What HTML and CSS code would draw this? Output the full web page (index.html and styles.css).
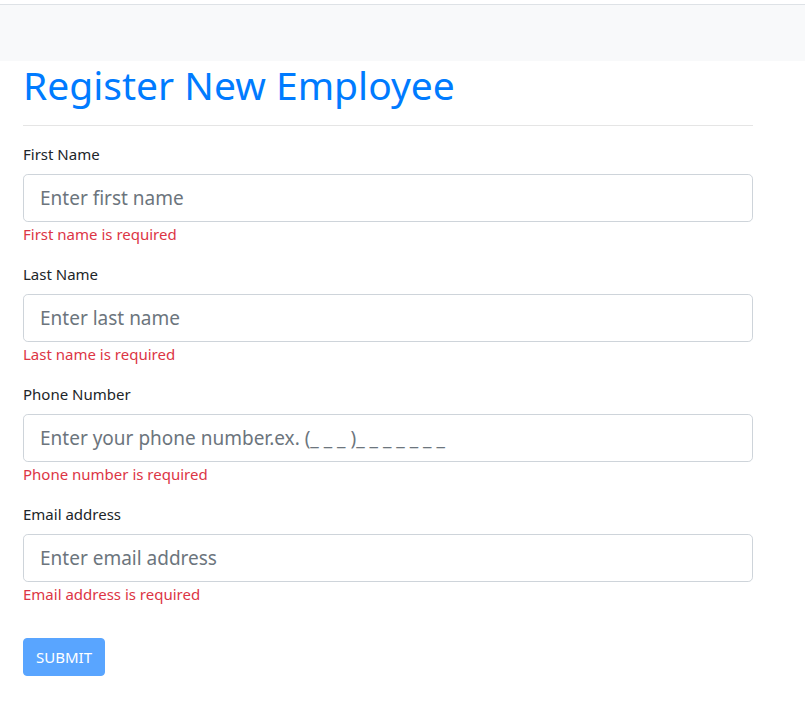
FILE: index.html
```html
<!DOCTYPE html>
<html lang="en">
<head>
<meta charset="utf-8">
<title>Register New Employee</title>
<link rel="stylesheet" href="styles.css">
</head>
<body>
<header class="navbar"></header>
<main class="container">
  <h1 class="title">Register New Employee</h1>
  <hr class="divider">
  <form class="form">
    <div class="group">
      <label class="label">First Name</label>
      <input class="input" type="text" placeholder="Enter first name">
      <div class="error">First name is required</div>
    </div>
    <div class="group">
      <label class="label">Last Name</label>
      <input class="input" type="text" placeholder="Enter last name">
      <div class="error">Last name is required</div>
    </div>
    <div class="group">
      <label class="label">Phone Number</label>
      <input class="input" type="text" placeholder="Enter your phone number.ex. (_ _ _ )_ _ _ _ _ _ _">
      <div class="error">Phone number is required</div>
    </div>
    <div class="group">
      <label class="label">Email address</label>
      <input class="input" type="text" placeholder="Enter email address">
      <div class="error">Email address is required</div>
    </div>
    <button class="submit" type="button">SUBMIT</button>
  </form>
</main>
</body>
</html>
```
FILE: styles.css
```css
* { box-sizing: border-box; }
body {
  margin: 0;
  font-family: "Noto Sans", "Open Sans", sans-serif;
  font-size: 15px;
  line-height: 24px;
  color: #212529;
  background: #fff;
}
.navbar {
  margin-top: 4px;
  height: 57px;
  border-top: 1px solid #dee2e6;
  background: #f8f9fa;
}
.container {
  width: 753px;
  padding-left: 23px;
}
.title {
  margin: 0;
  font-size: 39px;
  line-height: 48px;
  font-weight: 400;
  color: #007bff;
}
.divider {
  margin: 16px 0 16px;
  border: 0;
  border-top: 1px solid rgba(0,0,0,0.1);
}
.form { display: flex; flex-direction: column; }
.group {
  display: flex;
  flex-direction: column;
  margin-bottom: 16px;
}
.label {
  display: block;
  margin-bottom: 8px;
  line-height: 24px;
}
.input {
  height: 48px;
  width: 100%;
  padding: 8px 16px;
  font-family: inherit;
  font-size: 19px;
  color: #495057;
  border: 1px solid #ced4da;
  border-radius: 4.8px;
  background: #fff;
}
.input::placeholder { color: #6c757d; opacity: 1; }
.error {
  color: #dc3545;
  line-height: 24px;
}
.submit {
  align-self: flex-start;
  margin-top: 16px;
  height: 38px;
  padding: 6px 12px;
  font-family: inherit;
  font-size: 15px;
  line-height: 24px;
  color: #fff;
  background: #59a5ff;
  border: 1px solid #59a5ff;
  border-radius: 4px;
}
```
